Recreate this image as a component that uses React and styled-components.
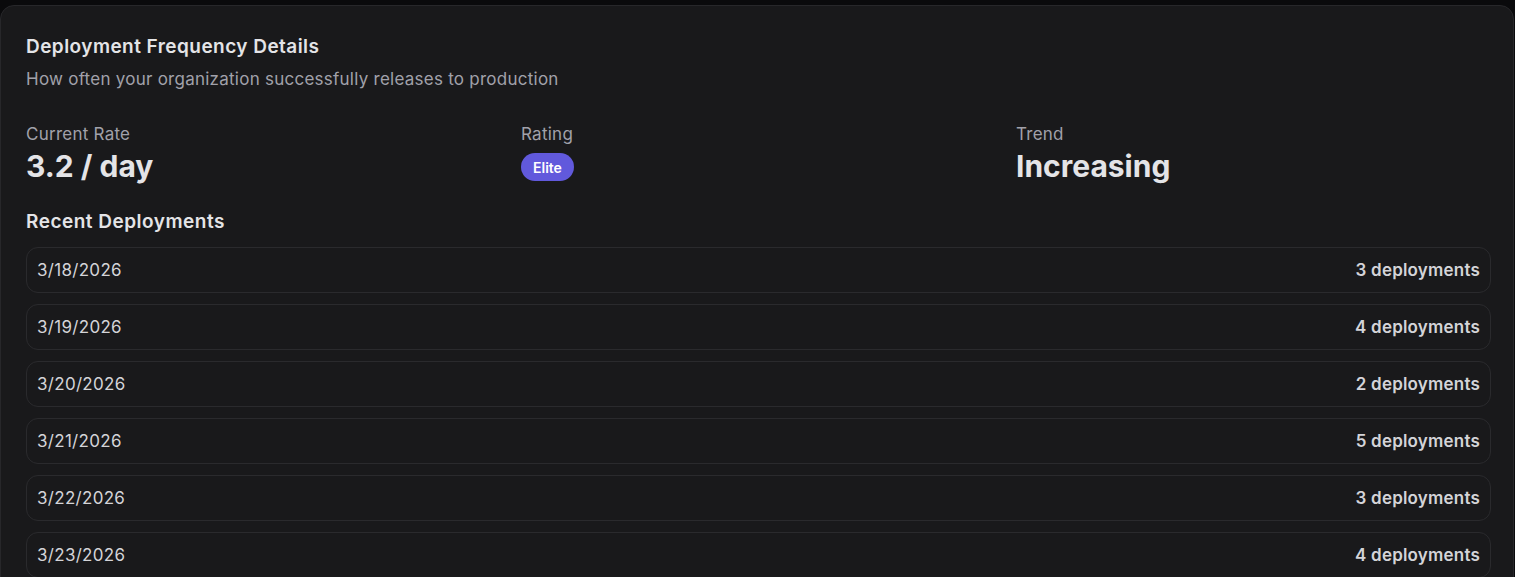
import React from 'react'
import styled, { createGlobalStyle } from 'styled-components';

const deployments = [
  { date: '3/18/2026', count: 3 },
  { date: '3/19/2026', count: 4 },
  { date: '3/20/2026', count: 2 },
  { date: '3/21/2026', count: 5 },
  { date: '3/22/2026', count: 3 },
  { date: '3/23/2026', count: 4 },
];

function App() {
  return (
    <>
      <GlobalStyle />
      <Page>
        <Card>
          <Header>
            <Title>Deployment Frequency Details</Title>
            <Subtitle>How often your organization successfully releases to production</Subtitle>
          </Header>
          <Stats>
            <Stat>
              <StatLabel>Current Rate</StatLabel>
              <StatValue>3.2 / day</StatValue>
            </Stat>
            <Stat>
              <StatLabel>Rating</StatLabel>
              <Badge>Elite</Badge>
            </Stat>
            <Stat>
              <StatLabel>Trend</StatLabel>
              <StatValue>Increasing</StatValue>
            </Stat>
          </Stats>
          <Section>
            <SectionTitle>Recent Deployments</SectionTitle>
            <List>
              {deployments.map((d) => (
                <Row key={d.date}>
                  <RowDate>{d.date}</RowDate>
                  <RowCount>{d.count} deployments</RowCount>
                </Row>
              ))}
            </List>
          </Section>
        </Card>
      </Page>
    </>
  )
}

const GlobalStyle = createGlobalStyle`
    html, body {
        margin: 0;
        padding: 0;
        background: #0a0a0c;
        overflow: hidden;
    }
    * {
        box-sizing: border-box;
    }
    body {
        font-family: Inter, "Noto Sans", sans-serif;
    }
`;
const Page = styled.div`
    padding-top: 5px;
    height: 577px;
    overflow: hidden;
`;
const Card = styled.div`
    width: 1514px;
    background-color: #19191b;
    border: 1px solid #27272a;
    border-radius: 14px;
    padding: 27px 22px 24px 25px;
    display: flex;
    flex-direction: column;
    gap: 24px;
`;
const Header = styled.div`
    display: flex;
    flex-direction: column;
    gap: 6px;
`;
const Title = styled.h2`
    margin: 0;
    font-size: 19px;
    line-height: 28px;
    font-weight: 600;
    letter-spacing: 0.45px;
    color: #e4e4e7;
`;
const Subtitle = styled.p`
    margin: 0;
    font-size: 17px;
    line-height: 24px;
    letter-spacing: 0.25px;
    color: #a1a1aa;
`;
const Stats = styled.div`
    display: grid;
    grid-template-columns: repeat(3, 1fr);
    column-gap: 20px;
    margin-top: 7px;
`;
const Stat = styled.div`
    display: flex;
    flex-direction: column;
    align-items: flex-start;
`;
const StatLabel = styled.span`
    font-size: 17px;
    line-height: 24px;
    letter-spacing: 0.25px;
    color: #a1a1aa;
`;
const StatValue = styled.span`
    margin-top: 2px;
    font-size: 30px;
    line-height: 36px;
    font-weight: 700;
    color: #e4e4e7;
`;
const Badge = styled.span`
    margin-top: 7px;
    display: inline-flex;
    align-items: center;
    height: 28px;
    padding: 0 12px;
    border-radius: 999px;
    background-color: #6159dc;
    color: #ffffff;
    font-size: 14px;
    font-weight: 600;
`;
const Section = styled.div`
    display: flex;
    flex-direction: column;
    gap: 11px;
`;
const SectionTitle = styled.h3`
    margin: 0;
    font-size: 19px;
    line-height: 28px;
    font-weight: 600;
    letter-spacing: 0.5px;
    color: #e4e4e7;
`;
const List = styled.div`
    display: flex;
    flex-direction: column;
    gap: 11px;
`;
const Row = styled.div`
    display: flex;
    justify-content: space-between;
    align-items: center;
    padding: 10px 10px;
    border: 1px solid #2a2a2d;
    border-radius: 12px;
    font-size: 17px;
    line-height: 24px;
    letter-spacing: 0.3px;
`;
const RowDate = styled.span`
    color: #d4d4d8;
`;
const RowCount = styled.span`
    color: #d4d4d8;
    font-weight: 600;
    letter-spacing: 0.2px;
`;

export default App
